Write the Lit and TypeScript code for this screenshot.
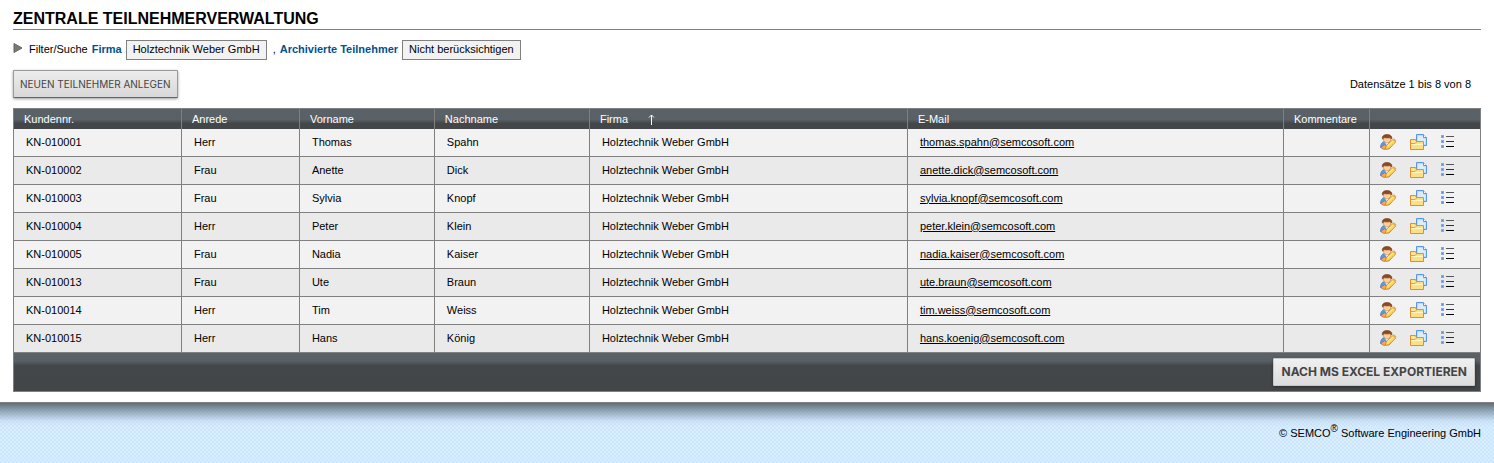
import { LitElement, html, svg, css } from "lit";
import { customElement, state } from "lit/decorators.js";

interface Participant {
  id: string;
  salutation: string;
  first: string;
  last: string;
  email: string;
}

const COMPANY = "Holztechnik Weber GmbH";

const person = (id: string, salutation: string, first: string, last: string, mail: string): Participant => ({
  id, salutation, first, last, email: `${mail}@semcosoft.com`,
});

const PARTICIPANTS: Participant[] = [
  person("KN-010001", "Herr", "Thomas", "Spahn", "thomas.spahn"),
  person("KN-010002", "Frau", "Anette", "Dick", "anette.dick"),
  person("KN-010003", "Frau", "Sylvia", "Knopf", "sylvia.knopf"),
  person("KN-010004", "Herr", "Peter", "Klein", "peter.klein"),
  person("KN-010005", "Frau", "Nadia", "Kaiser", "nadia.kaiser"),
  person("KN-010013", "Frau", "Ute", "Braun", "ute.braun"),
  person("KN-010014", "Herr", "Tim", "Weiss", "tim.weiss"),
  person("KN-010015", "Herr", "Hans", "König", "hans.koenig"),
];

const editIcon = svg`
  <path d="M.5 13.500C.5 10 2 8 4.500 7.500h4.500c2 .5 3 1.500 3.500 3l-3 4c-3 .8-6 .5-9-1z" fill="#5b9ae6" stroke="#3a72c0" stroke-width=".7"/>
  <path d="M4.500 7.800l2.500 3.700 2.500-3.700z" fill="#fff"/>
  <path d="M3.200 4c0 3.200 1.700 5 3.900 5S11 7.200 11 4z" fill="#fbcf9f" stroke="#c07a40" stroke-width=".6"/>
  <path d="M2.500 5.200C1.500 2 4 .5 7 .5s5.600 1.500 4.700 4.700c-.6-1-1.200-1.500-2.200-1.700-1.800.3-3.400.3-4.900 0-1 .2-1.600.8-2.100 1.700z" fill="#8a4a22" stroke="#6a3414" stroke-width=".5"/>
  <path d="M1 13.200l3.600-2.400 2.800 1.700-2.400 2.800c-1.600.2-3-.4-4-2.100z" fill="#f2a860" stroke="#b8621c" stroke-width=".6"/>
  <path d="M5.500 15.300l.7-3.500 6.800-6.300 2.800 2.600-7 6.700z" fill="#fcd85c" stroke="#d0841e" stroke-width=".8"/>
  <path d="M7.200 12.200l6-5.600" stroke="#fff3b0"/>
  <path d="M12.800 5.300l1.200-1 2.600 2.400-1.100 1.100z" fill="#eca35c"/>`;

const folderIcon = svg`
  <path d="M6.500.5h7l3 3v8h-10z" fill="#b9d8fa" stroke="#5a98e0"/>
  <path d="M8 2h5v2.500h2.500V10H8z" fill="#dcedff"/>
  <path d="M13.500.5v3h3" fill="#fff" stroke="#5a98e0"/>
  <path d="M.500 15.500v-10h5l1 2h7v8z" fill="#fbe084" stroke="#dc9030"/>
  <path d="M1 9.500h4l1.500-1.500" stroke="#e0a040" fill="none"/>
  <path d="M1 10.500h12" stroke="#fff6c4"/>
  <path d="M1 8h4" stroke="#fff2b8"/>`;

const listIcon = svg`
  <path d="M1 1h3v3H1zM1 6h3v3H1zM1 11h3v3H1z" fill="#7fa8ea"/>
  <path d="M2 2h1v1H2zM2 7h1v1H2zM2 12h1v1H2z" fill="#5b8ce0"/>
  <path d="M6 2.500h8" stroke="#555"/>
  <path d="M6 7.500h8" stroke="#333"/>
  <path d="M6 12.500h8" stroke="#000"/>`;

const ACTIONS = [
  { label: "Bearbeiten", icon: editIcon },
  { label: "Dokumente", icon: folderIcon },
  { label: "Details", icon: listIcon },
];

@customElement("app-root")
export class AppRoot extends LitElement {
  @state() private rows = PARTICIPANTS;

  static styles = css`
    :host {
      display: flex;
      flex-direction: column;
      min-height: 100vh;
      background: #fff;
      color: #000;
      font: 11px/16px "Liberation Sans", Arial, sans-serif;
    }
    button { font: inherit; color: inherit; cursor: pointer; }
    main { padding: 9px 13px 10px; }
    h1 {
      margin: 0;
      border-bottom: 1px solid #808080;
      font-size: 16px;
      line-height: 20px;
    }
    .filter { display: flex; align-items: baseline; margin-top: 10px; gap: 4px; }
    .toggle { margin: 0 2px 0 0; padding: 0; border: 0; background: none; }
    .toggle svg { display: block; }
    .filter-link { color: #00528f; font-weight: bold; text-decoration: none; }
    .chip {
      padding: 0 6px 2px;
      border: 1px solid #808080;
      background: #f2f2f2;
    }
    .comma { margin-left: 2px; }
    .toolbar {
      display: flex;
      align-items: center;
      justify-content: space-between;
      margin: 10px 0;
      padding-right: 10px;
    }
    .btn {
      height: 28px;
      padding: 0 6px;
      border: 1px solid #9a9a9a;
      border-bottom-color: #666;
      border-radius: 1px;
      background: linear-gradient(#ececec, #d8d8d8);
      box-shadow: 0 1px 3px rgba(0, 0, 0, 0.4);
      color: #444;
      font-family: Inter, sans-serif;
      font-size: 10px;
    }
    .btn-strong {
      padding: 0 7px;
      border-color: #c8c8c8;
      background: linear-gradient(#f0f0f0, #dcdcdc);
      font-size: 12px;
      font-weight: bold;
    }
    table {
      width: 100%;
      table-layout: fixed;
      border-collapse: collapse;
      border: 1px solid #808080;
    }
    .w-id { width: 11.45%; }
    .w-salutation { width: 8.04%; }
    .w-first { width: 9.2%; }
    .w-last { width: 10.57%; }
    .w-company { width: 21.68%; }
    .w-email { width: 25.63%; }
    .w-comment { width: 5.86%; }
    th, td { text-align: left; border-left: 1px solid #808080; }
    th { padding: 2px 10px; color: #fff; font-weight: normal; }
    thead tr { background: linear-gradient(#5a6268 0, #596167 50%, #444749 68%, #434648 100%); }
    .sort { padding: 0; border: 0; background: none; display: flex; gap: 20px; align-items: center; }
    tbody td { height: 25px; padding: 0 12px 2px; border-bottom: 1px solid #808080; }
    tbody tr { background: #f2f2f2; }
    tbody tr:nth-child(even) { background: #eaeaea; }
    .mail { color: inherit; }
    tbody .actions { padding: 0 10px 2px; }
    .icons { display: flex; gap: 12px; }
    .icon { display: flex; padding: 0; border: 0; background: none; }
    tfoot tr { background: linear-gradient(#5a6268 0, #596167 20%, #444749 32%, #434648 100%); }
    tfoot td { padding: 5px; text-align: right; }
    footer {
      flex: 1;
      padding: 20px 13px 16px;
      border-top: 1px solid #808080;
      background:
        linear-gradient(rgba(70, 78, 84, 0.8), rgba(80, 100, 112, 0.5) 8px, rgba(120, 150, 170, 0.1) 18px, rgba(120, 150, 170, 0) 24px),
        repeating-conic-gradient(#cce6ff 0 25%, #d9eeff 0 50%) 0 0 / 4px 4px;
      text-align: right;
      line-height: 20px;
    }
    sup { font-size: 10px; line-height: 0; }
  `;

  private renderRow(p: Participant) {
    return html`<tr>
      <td>${p.id}</td>
      <td>${p.salutation}</td>
      <td>${p.first}</td>
      <td>${p.last}</td>
      <td>${COMPANY}</td>
      <td><a class="mail" href="mailto:${p.email}">${p.email}</a></td>
      <td></td>
      <td class="actions">
        <div class="icons">
          ${ACTIONS.map((a) => html`<button class="icon" type="button" aria-label=${a.label}>
            <svg width="18" height="16" viewBox="0 0 18 16" fill="none">${a.icon}</svg>
          </button>`)}
        </div>
      </td>
    </tr>`;
  }

  render() {
    return html`
      <main>
        <h1>ZENTRALE TEILNEHMERVERWALTUNG</h1>
        <div class="filter">
          <button class="toggle" type="button" aria-label="Filter anzeigen">
            <svg width="10" height="10" viewBox="0 0 10 10"><path d="M1 .5v9L9 5z" fill="#777" stroke="#666" /></svg>
          </button>
          <span>Filter/Suche</span>
          <a class="filter-link" href="#firma">Firma</a>
          <span class="chip">${COMPANY}</span>
          <span class="comma">,</span>
          <a class="filter-link" href="#archiv">Archivierte Teilnehmer</a>
          <span class="chip">Nicht berücksichtigen</span>
        </div>
        <div class="toolbar">
          <button class="btn" type="button">NEUEN TEILNEHMER ANLEGEN</button>
          <span>Datensätze 1 bis 8 von 8</span>
        </div>
        <table>
          <colgroup>
            <col class="w-id" /><col class="w-salutation" /><col class="w-first" /><col class="w-last" />
            <col class="w-company" /><col class="w-email" /><col class="w-comment" /><col />
          </colgroup>
          <thead>
            <tr>
              <th>Kundennr.</th>
              <th>Anrede</th>
              <th>Vorname</th>
              <th>Nachname</th>
              <th aria-sort="ascending">
                <button class="sort" type="button">
                  <span>Firma</span>
                  <svg width="7" height="11" viewBox="0 0 7 11" fill="none" stroke="#fff">
                    <path d="M3.500 11V1M1 3.500L3.500 1 6 3.500" />
                  </svg>
                </button>
              </th>
              <th>E-Mail</th>
              <th>Kommentare</th>
              <th></th>
            </tr>
          </thead>
          <tbody>${this.rows.map((p) => this.renderRow(p))}</tbody>
          <tfoot>
            <tr>
              <td colspan="8"><button class="btn btn-strong" type="button">NACH MS EXCEL EXPORTIEREN</button></td>
            </tr>
          </tfoot>
        </table>
      </main>
      <footer>© SEMCO<sup>®</sup> Software Engineering GmbH</footer>
    `;
  }
}
